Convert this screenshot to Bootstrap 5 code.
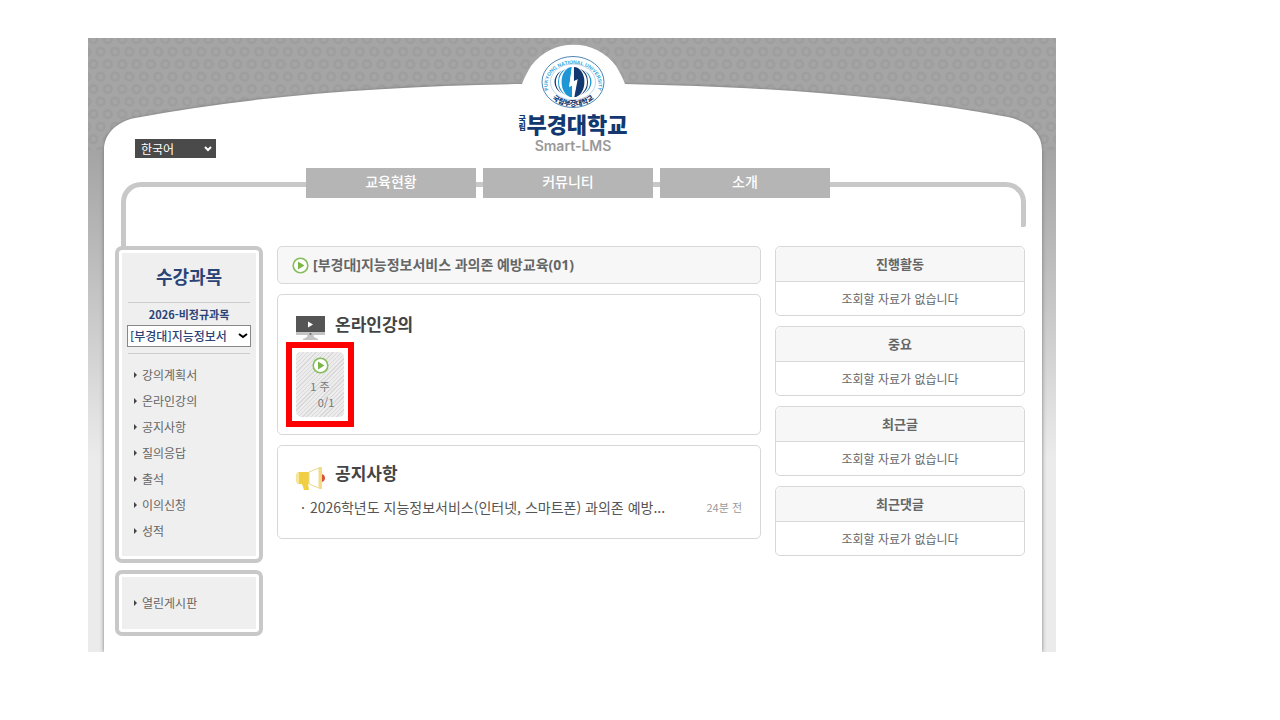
<!DOCTYPE html>
<html lang="ko">
<head>
<meta charset="utf-8">
<meta name="viewport" content="width=device-width, initial-scale=1">
<title>Smart-LMS</title>
<link href="https://cdn.jsdelivr.net/npm/bootstrap@5.3.0/dist/css/bootstrap.min.css" rel="stylesheet">
<style>
  body { font-family: "Noto Sans CJK KR", sans-serif; font-size: 12px; line-height: 18px; color: #666; background: #fff; }
  a { color: inherit; text-decoration: none; }
  .lms-frame { margin: 38px 224px 0 88px; background: linear-gradient(#a4a4a4 112px, #b9b9b9 210px, #ebebeb 420px); }
  .backdrop-arch { top: 0; left: 0; width: 100%; height: 112px; }
  .backdrop-sheet { top: 111px; bottom: 0; left: 16px; right: 14px; background: #fff; box-shadow: 0 0 4px #777; clip-path: inset(0 -5px); }
  .lms-sheet { margin: 0 14px 0 16px; padding-bottom: 16px; }
  .lms-header { height: 130px; padding: 0 31px; }
  .side-slot { width: 81px; padding-bottom: 10px; }
  .lang-select { height: 19px; padding: 0 20px 0 6px; font-size: 12px; line-height: 17px; color: #fff; border: 0; border-radius: 0; background: #4a4a4a url("data:image/svg+xml,%3Csvg xmlns='http://www.w3.org/2000/svg' viewBox='0 0 8 6'%3E%3Cpath d='M1 1l3 3 3-3' fill='none' stroke='white' stroke-width='2'/%3E%3C/svg%3E") no-repeat right 4px center / 8px 6px; }
  .brand-seal { width: 64px; height: 54px; margin-top: 17px; }
  .brand-name { font-size: 22px; font-weight: 900; line-height: 28px; color: #12386f; }
  .brand-prefix { font-size: 8px; line-height: 8px; width: 8px; }
  .brand-sub { font-family: Inter, sans-serif; font-size: 14px; font-weight: 600; line-height: 18px; color: #999; }
  .main-menu { height: 78px; padding-right: 10px; gap: 7px; }
  .main-menu::before, .main-menu::after { content: ""; position: absolute; top: 14px; border-top: 5px solid #c8c8c8; }
  .main-menu::before { left: 17px; right: 50%; height: 66px; border-left: 5px solid #c8c8c8; border-top-left-radius: 20px; }
  .main-menu::after { left: 50%; right: 16px; height: 45px; border-right: 5px solid #c8c8c8; border-radius: 0 20px 2px 0; }
  .main-menu a { z-index: 1; width: 170px; height: 30px; line-height: 26px; font-size: 14px; font-weight: 500; color: #fff; background: #b5b5b5; }
  .lms-columns { gap: 14px; padding: 0 17px 0 11px; }
  .left-side { width: 148px; flex: none; gap: 7px; }
  .right-side { width: 250px; flex: none; gap: 10px; }
  .center-side { min-width: 0; gap: 10px; }
  .menu-panel { z-index: 1; border: 4px solid #c8c8c8; border-radius: 7px; background: #efefef; box-shadow: inset 0 0 0 3px #fff; padding: 0 8px; }
  .menu-panel h2 { font-size: 18px; line-height: 22px; font-weight: 700; color: #2b4478; padding: 15px 0; margin: 0 1px; border-bottom: 1px solid #ccc; }
  .menu-panel .term { font-size: 11px; line-height: 22px; font-weight: 700; color: #2b4478; }
  .course-select { height: 22px; padding: 0 14px 0 2px; font-size: 12px; line-height: 18px; font-weight: 500; color: #2b4478; border: 1px solid #888; border-radius: 0; background: #fff url("data:image/svg+xml,%3Csvg xmlns='http://www.w3.org/2000/svg' viewBox='0 0 10 6'%3E%3Cpath d='M1 1l4 3 4-3' fill='none' stroke='black' stroke-width='2'/%3E%3C/svg%3E") no-repeat right 2px center / 10px 6px; }
  .side-menu { font-size: 12px; line-height: 26px; padding-left: 7px; }
  .side-menu.course-menu { border-top: 1px solid #ccc; margin: 6px 1px 0; padding: 8px 0 15px 6px; }
  .side-menu li { display: flex; align-items: center; gap: 5px; }
  .side-menu li::before { content: ""; border: solid transparent; border-width: 3px 0 3px 3px; border-left-color: #444; }
  .open-menu { padding: 16px 0 16px 7px; }
  .box { border: 1px solid #d8d8d8; border-radius: 5px; background: #fff; }
  .course-title { height: 38px; padding: 0 14px; gap: 4px; background: #f7f7f7; font-family: "Noto Sans", "Noto Sans CJK KR", sans-serif; font-size: 14px; line-height: 22px; font-weight: 700; color: #666; }
  .section-title { height: 24px; gap: 10px; font-size: 17px; line-height: 24px; font-weight: 700; color: #444; margin: 0; }
  .lecture-box { padding: 17px 18px 17px; }
  .week-focus { width: 68px; margin: 6px 0 -10px -10px; padding: 4px; border: 6px solid #f00; }
  .week-tile { height: 65px; padding-top: 5px; border-radius: 5px; font-size: 11px; line-height: 16px; color: #777; background: repeating-linear-gradient(135deg, #ececec 0 2px, #d9d9d9 2px 3px); }
  .week-tile .count { padding-left: 12px; }
  .notice-box { padding: 15px 18px 21px; }
  .notice-box .notice-row { font-size: 14px; line-height: 20px; margin-top: 12px; padding-left: 5px; color: #555; }
  .notice-row a::before { content: "·"; margin-right: 5px; }
  .notice-row time { font-size: 11px; color: #999; }
  .mini h3 { font-size: 13px; line-height: 34px; font-weight: 700; color: #666; background: #f7f7f7; border-bottom: 1px solid #d8d8d8; border-radius: 5px 5px 0 0; }
  .mini p { line-height: 33px; font-size: 12px; }
</style>
</head>
<body>
<div class="lms-frame position-relative">
  <div class="backdrop-sheet position-absolute"></div>
  <svg class="backdrop-arch position-absolute" viewBox="0 0 968 112" preserveAspectRatio="none" aria-hidden="true">
    <defs>
      <pattern id="rings" width="14.4" height="25" patternUnits="userSpaceOnUse">
        <rect width="14.4" height="25" fill="#a5a5a5"/>
        <g fill="none" stroke="#9e9e9e" stroke-width="2.6">
          <circle cx="5.4" cy="1.2" r="3.8"/><circle cx="5.4" cy="26.2" r="3.8"/>
          <circle cx="12.6" cy="13.7" r="3.8"/><circle cx="-1.8" cy="13.7" r="3.8"/>
        </g>
      </pattern>
      <filter id="soft" x="-5%" y="-5%" width="110%" height="130%"><feGaussianBlur stdDeviation="1.5"/></filter>
    </defs>
    <rect width="968" height="112" fill="url(#rings)"/>
    <path d="M16 130V112C16 96 28 84 47 80C170 57 300 48 434 46H537C680 49 800 57 920 79C942 84 954 96 954 112V130Z" fill="#777" filter="url(#soft)"/>
    <path d="M16 130V112C16 96 28 84 47 80C170 57 300 48 434 46Q437 38 443 28A53 53 0 0 1 528 28Q534 38 537 46C680 49 800 57 920 79C942 84 954 96 954 112V130Z" fill="#fff"/>
  </svg>

  <div class="lms-sheet position-relative">
    <header class="lms-header d-flex justify-content-between">
      <div class="side-slot d-flex align-items-end">
        <select class="form-select lang-select" aria-label="언어"><option>한국어</option></select>
      </div>
      <a href="#" class="d-flex flex-column align-items-center">
        <svg class="brand-seal" viewBox="0 0 64 54" role="img" aria-label="국립부경대학교">
          <ellipse cx="32" cy="27" rx="31" ry="25.5" fill="#fff" stroke="#4f86b5" stroke-width="1"/>
          <ellipse cx="32" cy="27" rx="22.500" ry="18" fill="#fff" stroke="#a5c3dc" stroke-width=".7"/>
          <path id="ringTop" d="M7 34A25.500 21 0 1 1 57 34" fill="none"/>
          <path id="ringBottom" d="M5 34A28 23.500 0 0 0 59 34" fill="none"/>
          <text font-family="Liberation Sans, sans-serif" font-size="5" font-weight="700" fill="#2fa3dc"><textPath href="#ringTop" startOffset="50%" text-anchor="middle">PUKYONG NATIONAL UNIVERSITY</textPath></text>
          <text font-size="7" font-weight="900" fill="#12386f"><textPath href="#ringBottom" startOffset="50%" text-anchor="middle">국립부경대학교</textPath></text>
          <g transform="translate(32 27) scale(.95 1.04) translate(-32 -27)">
          <path d="M20 16a16 13 0 0 0 0 22a19 15 0 0 1 0-22z" fill="#12386f"/>
          <path d="M25 14a14 14 0 0 0 0 26a22 17 0 0 1 0-26z" fill="#1e95d4"/>
          <path d="M44 16a16 13 0 0 1 0 22a19 15 0 0 0 0-22z" fill="#1e95d4"/>
          <path d="M39 14a14 14 0 0 1 0 26a22 17 0 0 0 0-26z" fill="#12386f"/>
          <path d="M31 12.500A11 14.500 0 0 0 31 41.500V30L28 31z" fill="#1e95d4"/>
          <path d="M33 12.500A11 14.500 0 0 1 33 41.500L36 25L33 26z" fill="#12386f"/>
          <path d="M31 11L32 27L37 24L33 43L32 30L28 32Z" fill="#fff"/>
          </g>
        </svg>
        <span class="brand-name d-flex align-items-center"><span class="brand-prefix">국립</span>부경대학교</span>
        <span class="brand-sub">Smart-LMS</span>
      </a>
      <div class="side-slot"></div>
    </header>

    <nav class="main-menu position-relative d-flex justify-content-center text-center">
      <a href="#">교육현황</a>
      <a href="#">커뮤니티</a>
      <a href="#">소개</a>
    </nav>

    <div class="lms-columns d-flex align-items-start">
      <aside class="left-side d-flex flex-column">
        <section class="menu-panel position-relative">
          <h2 class="text-center">수강과목</h2>
          <label for="course" class="term d-block text-center">2026-비정규과목</label>
          <select id="course" class="form-select course-select"><option>[부경대]지능정보서</option></select>
          <ul class="side-menu course-menu list-unstyled">
            <li><a href="#">강의계획서</a></li>
            <li><a href="#">온라인강의</a></li>
            <li><a href="#">공지사항</a></li>
            <li><a href="#">질의응답</a></li>
            <li><a href="#">출석</a></li>
            <li><a href="#">이의신청</a></li>
            <li><a href="#">성적</a></li>
          </ul>
        </section>
        <section class="menu-panel">
          <ul class="side-menu open-menu list-unstyled mb-0">
            <li><a href="#">열린게시판</a></li>
          </ul>
        </section>
      </aside>

      <main class="center-side d-flex flex-column flex-grow-1">
        <h1 class="box course-title d-flex align-items-center mb-0">
          <svg width="17" height="17" viewBox="0 0 17 17" aria-hidden="true"><circle cx="8.500" cy="8.500" r="7.300" fill="#fff" stroke="#84bd5a" stroke-width="1.600"/><path d="M6 4.500l6.500 4-6.500 4z" fill="#7ab648"/></svg>
          <span>[부경대]지능정보서비스 과의존 예방교육(01)</span>
        </h1>
        <section class="box lecture-box">
          <h2 class="section-title d-flex">
            <svg class="mt-1" width="29" height="24" viewBox="0 0 29 24" aria-hidden="true"><path d="M0 15h29v4H0z" fill="#c4c4c4"/><path d="M0 0h29v16H0z" fill="#555"/><path d="M12 5.500l5 3-5 3z" fill="#fff"/><path d="M12 17h5l1 4 4 2v1H7v-1l4-2z" fill="#c4c4c4"/><circle cx="14.500" cy="18" r="1" fill="#666"/></svg>
            온라인강의
          </h2>
          <div class="week-focus">
            <a href="#" class="week-tile d-flex flex-column align-items-center">
              <svg width="17" height="17" viewBox="0 0 17 17" aria-hidden="true"><circle cx="8.500" cy="8.500" r="7.300" fill="#fff" stroke="#84bd5a" stroke-width="1.600"/><path d="M6 4.500l6.500 4-6.500 4z" fill="#7ab648"/></svg>
              <span class="mt-1">1 주</span>
              <span class="count">0/1</span>
            </a>
          </div>
        </section>
        <section class="box notice-box">
          <h2 class="section-title d-flex">
            <svg class="mt-1" width="29" height="26" viewBox="0 0 29 26" aria-hidden="true"><path d="M3 7h10v12h-1l1 6H8L6 19H3Q0 19 0 13T3 7z" fill="#f0cf45"/><path d="M0 13Q0 7 3 7V19Q0 19 0 13z" fill="#f7e69c"/><path d="M13 7L23 3V23L13 19z" fill="#fff" stroke="#ecd98a" stroke-width="1"/><path d="M23 2h3v22h-3z" fill="#f3dd84"/><path d="M26 9q3 1 3 4t-3 4z" fill="#d8573a"/></svg>
            공지사항
          </h2>
          <div class="notice-row d-flex justify-content-between">
            <a href="#" class="text-truncate">2026학년도 지능정보서비스(인터넷, 스마트폰) 과의존 예방...</a>
            <time>24분 전</time>
          </div>
        </section>
      </main>

      <aside class="right-side d-flex flex-column text-center">
        <section class="box mini"><h3 class="mb-0">진행활동</h3><p class="mb-0">조회할 자료가 없습니다</p></section>
        <section class="box mini"><h3 class="mb-0">중요</h3><p class="mb-0">조회할 자료가 없습니다</p></section>
        <section class="box mini"><h3 class="mb-0">최근글</h3><p class="mb-0">조회할 자료가 없습니다</p></section>
        <section class="box mini"><h3 class="mb-0">최근댓글</h3><p class="mb-0">조회할 자료가 없습니다</p></section>
      </aside>
    </div>
  </div>
</div>
<script src="https://cdn.jsdelivr.net/npm/bootstrap@5.3.0/dist/js/bootstrap.bundle.min.js"></script>
</body>
</html>
